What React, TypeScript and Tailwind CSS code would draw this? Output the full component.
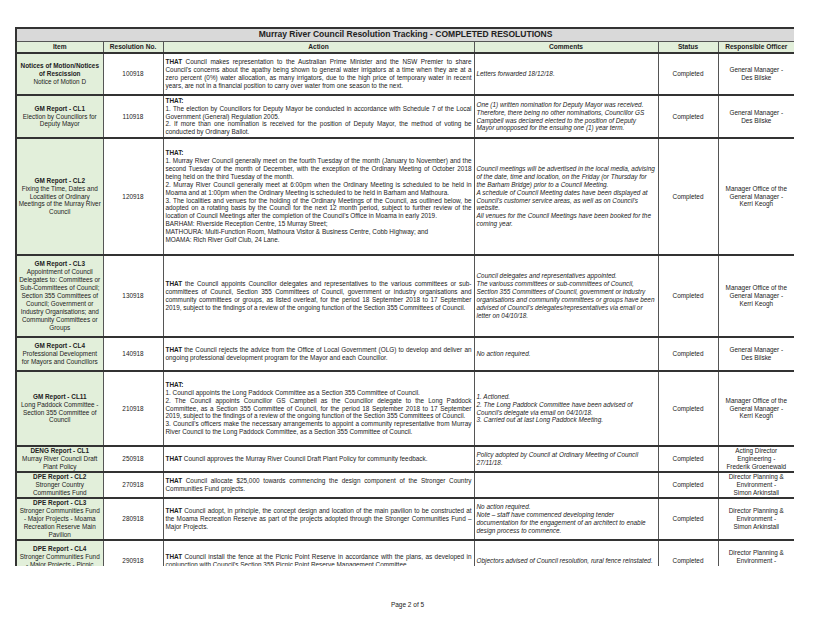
const rows = [
  {
    h: 42,
    item: ["Notices of Motion/Notices of Rescission", "Notice of Motion D"],
    no: "100918",
    action: [<><b>THAT</b> Council makes representation to the Australian Prime Minister and the NSW Premier to share Council's concerns about the apathy being shown to general water irrigators at a time when they are at a zero percent (0%) water allocation, as many irrigators, due to the high price of temporary water in recent years, are not in a financial position to carry over water from one season to the next.</>],
    comments: ["Letters forwarded 18/12/18."],
    officer: ["General Manager -", "Des Bilske"],
  },
  {
    h: 43,
    item: ["GM Report - CL1", "Election by Councillors for Deputy Mayor"],
    no: "110918",
    action: [<b>THAT:</b>, "1. The election by Councillors for Deputy Mayor be conducted in accordance with Schedule 7 of the Local Government (General) Regulation 2005.", "2. If more than one nomination is received for the position of Deputy Mayor, the method of voting be conducted by Ordinary Ballot."],
    comments: ["One (1) written nomination for Deputy Mayor was received. Therefore, there being no other nominations, Councillor GS Campbell was declared elected to the position of Deputy Mayor unopposed for the ensuing one (1) year term."],
    officer: ["General Manager -", "Des Bilske"],
  },
  {
    h: 117,
    item: ["GM Report - CL2", "Fixing the Time, Dates and Localities of Ordinary Meetings of the Murray River Council"],
    no: "120918",
    action: [<b>THAT:</b>, "1. Murray River Council generally meet on the fourth Tuesday of the month (January to November) and the second Tuesday of the month of December, with the exception of the Ordinary Meeting of October 2018 being held on the third Tuesday of the month.", "2. Murray River Council generally meet at 6:00pm when the Ordinary Meeting is scheduled to be held in Moama and at 1:00pm when the Ordinary Meeting is scheduled to be held in Barham and Mathoura.", "3. The localities and venues for the holding of the Ordinary Meetings of the Council, as outlined below, be adopted on a rotating basis by the Council for the next 12 month period, subject to further review of the location of Council Meetings after the completion of the Council's Office in Moama in early 2019.", "BARHAM: Riverside Reception Centre, 15 Murray Street;", "MATHOURA: Multi-Function Room, Mathoura Visitor & Business Centre, Cobb Highway; and", "MOAMA: Rich River Golf Club, 24 Lane."],
    comments: ["Council meetings will be advertised in the local media, advising of the date, time and location, on the Friday (or Thursday for the Barham Bridge) prior to a Council Meeting.", "A schedule of Council Meeting dates have been displayed at Council's customer service areas, as well as on Council's website.", "All venues for the Council Meetings have been booked for the coming year."],
    officer: ["Manager Office of the", "General Manager -", "Kerri Keogh"],
  },
  {
    h: 82,
    item: ["GM Report - CL3", "Appointment of Council Delegates to: Committees or Sub-Committees of Council; Section 355 Committees of Council; Government or Industry Organisations; and Community Committees or Groups"],
    no: "130918",
    action: [<><b>THAT</b> the Council appoints Councillor delegates and representatives to the various committees or sub-committees of Council, Section 355 Committees of Council, government or industry organisations and community committees or groups, as listed overleaf, for the period 18 September 2018 to 17 September 2019, subject to the findings of a review of the ongoing function of the Section 355 Committees of Council.</>],
    comments: ["Council delegates and representatives appointed.", "The variouss committees or sub-committees of Council, Section 355 Committees of Council, government or industry organisations and community committees or groups have been advised of Council's delegates/representatives via email or letter on 04/10/18."],
    officer: ["Manager Office of the", "General Manager -", "Kerri Keogh"],
  },
  {
    h: 34,
    item: ["GM Report - CL4", "Professional Development for Mayors and Councillors"],
    no: "140918",
    action: [<><b>THAT</b> the Council rejects the advice from the Office of Local Government (OLG) to develop and deliver an ongoing professional development program for the Mayor and each Councillor.</>],
    comments: ["No action required."],
    officer: ["General Manager -", "Des Bilske"],
  },
  {
    h: 75,
    item: ["GM Report - CL11", "Long Paddock Committee - Section 355 Committee of Council"],
    no: "210918",
    action: [<b>THAT:</b>, "1. Council appoints the Long Paddock Committee as a Section 355 Committee of Council.", "2. The Council appoints Councillor GS Campbell as the Councillor delegate to the Long Paddock Committee, as a Section 355 Committee of Council, for the period 18 September 2018 to 17 September 2019, subject to the findings of a review of the ongoing function of the Section 355 Committees of Council.", "3. Council's officers make the necessary arrangements to appoint a community representative from Murray River Council to the Long Paddock Committee, as a Section 355 Committee of Council."],
    comments: ["1. Actioned.", "2. The Long Paddock Committee have been advised of Council's delegate via email on 04/10/18.", "3. Carried out at last Long Paddock Meeting."],
    officer: ["Manager Office of the", "General Manager -", "Kerri Keogh"],
  },
  {
    h: 26,
    item: ["DENG Report - CL1", "Murray River Council Draft Plant Policy"],
    no: "250918",
    action: [<><b>THAT</b> Council approves the Murray River Council Draft Plant Policy for community feedback.</>],
    comments: ["Policy adopted by Council at Ordinary Meeting of Council 27/11/18."],
    officer: ["Acting Director", "Engineering -", "Frederik Groenewald"],
  },
  {
    h: 26,
    item: ["DPE Report - CL2", "Stronger Country Communities Fund"],
    no: "270918",
    action: [<><b>THAT</b> Council allocate $25,000 towards commencing the design component of the Stronger Country Communities Fund projects.</>],
    comments: [],
    officer: ["Director Planning &", "Environment -", "Simon Arkinstall"],
  },
  {
    h: 42,
    item: ["DPE Report - CL3", "Stronger Communities Fund - Major Projects - Moama Recreation Reserve Main Pavilion"],
    no: "280918",
    action: [<><b>THAT</b> Council adopt, in principle, the concept design and location of the main pavilion to be constructed at the Moama Recreation Reserve as part of the projects adopted through the Stronger Communities Fund – Major Projects.</>],
    comments: ["No action required.", "Note – staff have commenced developing tender documentation for the engagement of an architect to enable design process to commence."],
    officer: ["Director Planning &", "Environment -", "Simon Arkinstall"],
  },
  {
    h: 42,
    item: ["DPE Report - CL4", "Stronger Communities Fund - Major Projects - Picnic Point Reserve Fence"],
    no: "290918",
    action: [<><b>THAT</b> Council install the fence at the Picnic Point Reserve in accordance with the plans, as developed in conjunction with Council's Section 355 Picnic Point Reserve Management Committee.</>],
    comments: ["Objectors advised of Council resolution, rural fence reinstated."],
    officer: ["Director Planning &", "Environment -", "Simon Arkinstall"],
  },
];

export default function App() {
  return (
    <div className="w-[815px] h-[626px] bg-white relative text-[#222] font-[Liberation_Sans,Arial,sans-serif] text-[6.4px] leading-[7.9px]">
      <div className="absolute left-[15px] top-[27px] w-[779px] h-[539px] overflow-hidden">
        <table className="table-fixed border-collapse w-[779px] border-2 border-[#333]">
          <colgroup>
            <col className="w-[87px]" />
            <col className="w-[60px]" />
            <col className="w-[311px]" />
            <col className="w-[184px]" />
            <col className="w-[60px]" />
            <col className="w-[77px]" />
          </colgroup>
          <thead>
            <tr className="h-[13px] bg-[#d9d9d9]">
              <th colSpan={6} className="border border-[#555] text-[8.5px] font-bold text-center">
                Murray River Council Resolution Tracking - COMPLETED RESOLUTIONS
              </th>
            </tr>
            <tr className="h-[12px] bg-[#e2efda] border-b-2 border-[#333]">
              {["Item", "Resolution No.", "Action", "Comments", "Status", "Responsible Officer"].map((t) => (
                <th key={t} className="border border-[#555] font-bold text-center text-[6.6px]">{t}</th>
              ))}
            </tr>
          </thead>
          <tbody>
            {rows.map((r) => (
              <tr key={r.no} style={{ height: r.h }} className="border-b-2 border-[#333]">
                <td className="border border-[#555] bg-[#e2efda] text-center align-middle px-px">
                  <div className="font-bold">{r.item[0]}</div>
                  <div>{r.item[1]}</div>
                </td>
                <td className="border border-[#555] text-center align-middle">{r.no}</td>
                <td className="border border-[#555] align-middle px-[2px] text-justify">
                  {r.action.map((a, i) => <div key={i}>{a}</div>)}
                </td>
                <td className="border border-[#555] align-middle px-[2px] italic">
                  {r.comments.map((c, i) => <div key={i}>{c}</div>)}
                </td>
                <td className="border border-[#555] text-center align-middle">Completed</td>
                <td className="border border-[#555] text-center align-middle">
                  {r.officer.map((o, i) => <div key={i}>{o}</div>)}
                </td>
              </tr>
            ))}
          </tbody>
        </table>
      </div>
      <div className="absolute left-0 right-0 top-[601px] text-center text-[6.5px]">Page 2 of 5</div>
    </div>
  );
}
